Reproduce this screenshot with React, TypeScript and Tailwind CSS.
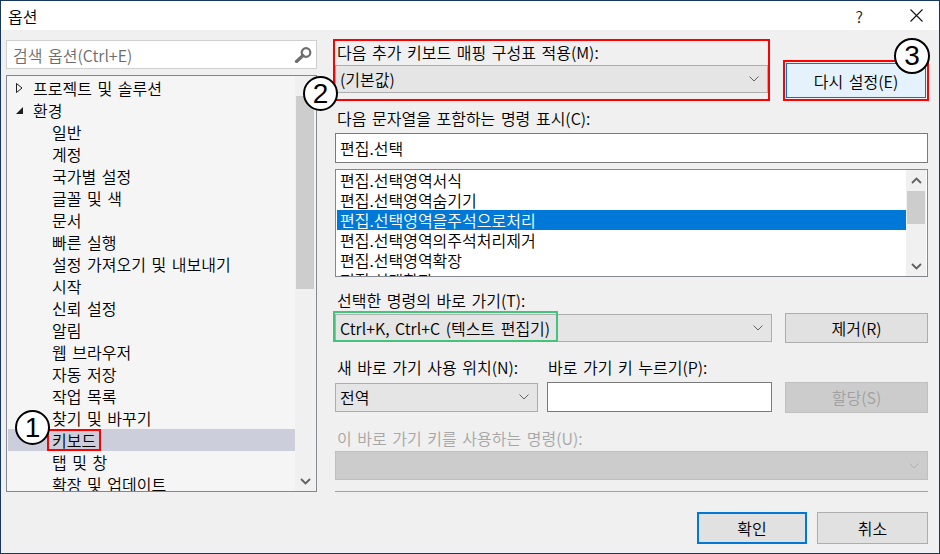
import React from "react";

function Chevron({ className = "" }: { className?: string }) {
  return (
    <svg width="10" height="6" viewBox="0 0 10 6" className={className}>
      <path d="M0.5 0.5 L5 5 L9.5 0.5" fill="none" stroke="currentColor" strokeWidth="1" />
    </svg>
  );
}

function ScrollChevron({ up = false }: { up?: boolean }) {
  return (
    <svg width="11" height="7" viewBox="0 0 11 7" className="text-[#606060]">
      <path
        d={up ? "M1 6 L5.5 1.5 L10 6" : "M1 1 L5.5 5.5 L10 1"}
        fill="none"
        stroke="currentColor"
        strokeWidth="1.8"
      />
    </svg>
  );
}

function Combo({
  text,
  className = "",
  disabled = false,
}: {
  text?: string;
  className?: string;
  disabled?: boolean;
}) {
  return (
    <div
      className={
        "flex items-center border " +
        (disabled ? "border-[#bfbfbf] bg-[#cccccc]" : "border-[#adadad] bg-[#e5e5e5]") +
        " " +
        className
      }
    >
      <span className="pl-[4px] flex-1 leading-[20px] whitespace-nowrap">{text}</span>
      <Chevron className={disabled ? "mr-[8px] text-[#b0b0b0]" : "mr-[8px] text-[#606060]"} />
    </div>
  );
}

function Circle({ n, className }: { n: string; className: string }) {
  return (
    <div
      className={
        "absolute rounded-full border-2 border-black bg-white flex items-center justify-center text-[28px] leading-none font-normal font-['Liberation_Sans',sans-serif] " +
        className
      }
    >
      {n}
    </div>
  );
}

const treeItems: { label: string; level: number; kind?: "collapsed" | "expanded"; selected?: boolean }[] = [
  { label: "프로젝트 및 솔루션", level: 0, kind: "collapsed" },
  { label: "환경", level: 0, kind: "expanded" },
  { label: "일반", level: 1 },
  { label: "계정", level: 1 },
  { label: "국가별 설정", level: 1 },
  { label: "글꼴 및 색", level: 1 },
  { label: "문서", level: 1 },
  { label: "빠른 실행", level: 1 },
  { label: "설정 가져오기 및 내보내기", level: 1 },
  { label: "시작", level: 1 },
  { label: "신뢰 설정", level: 1 },
  { label: "알림", level: 1 },
  { label: "웹 브라우저", level: 1 },
  { label: "자동 저장", level: 1 },
  { label: "작업 목록", level: 1 },
  { label: "찾기 및 바꾸기", level: 1 },
  { label: "키보드", level: 1, selected: true },
  { label: "탭 및 창", level: 1 },
  { label: "확장 및 업데이트", level: 1 },
];

const commands = [
  "편집.선택영역서식",
  "편집.선택영역숨기기",
  "편집.선택영역을주석으로처리",
  "편집.선택영역의주석처리제거",
  "편집.선택영역확장",
  "편집.선택확장",
];

export default function App() {
  return (
    <div className="w-[940px] h-[554px] border border-[#17375e] bg-[#f0f0f0] flex flex-col relative overflow-hidden font-['Noto_Sans_CJK_KR','Noto_Sans',sans-serif] font-[350] text-[16px] [word-spacing:2px] text-black">
      {/* Title bar */}
      <div className="h-[29px] bg-white flex items-center shrink-0">
        <span className="ml-[7px] leading-[20px]">옵션</span>
        <span className="ml-auto leading-[20px] text-[16px] text-[#222]">?</span>
        <svg width="13" height="13" viewBox="0 0 13 13" className="ml-[47px] mr-[16px]">
          <path d="M0.5 0.5 L12.5 12.5 M12.5 0.5 L0.5 12.5" stroke="#111" strokeWidth="1.1" />
        </svg>
      </div>

      <div className="flex flex-1">
        {/* Left column */}
        <div className="ml-[5px] mt-[10px] w-[311px] flex flex-col shrink-0">
          <div className="h-[29px] border border-[#cfcfcf] bg-white flex items-center">
            <span className="pl-[6px] text-[#6d6d6d] leading-[20px]">검색 옵션(Ctrl+E)</span>
            <svg width="18" height="16" viewBox="0 0 18 16" className="ml-auto mr-[4px]">
              <circle cx="12" cy="5.5" r="4.3" fill="none" stroke="#6d6d6d" strokeWidth="2.2" />
              <path d="M9 8.5 L2.5 14.5" stroke="#6d6d6d" strokeWidth="3.2" strokeLinecap="round" />
            </svg>
          </div>
          <div className="mt-[6px] h-[417px] border border-[#828790] bg-[#f5f5f5] flex overflow-hidden">
            <div className="flex-1 pl-[1px] pt-[1px] flex flex-col overflow-hidden">
              {treeItems.map((it) => (
                <div
                  key={it.label}
                  className={
                    "relative h-[22px] shrink-0 flex items-center leading-[22px] whitespace-nowrap " +
                    (it.selected ? "bg-[#cccedb]" : "")
                  }
                >
                  {it.level === 0 ? (
                    <>
                      <span className="w-[25px] flex justify-start pl-[8px] shrink-0">
                        {it.kind === "collapsed" ? (
                          <svg width="7" height="10" viewBox="0 0 7 10">
                            <path d="M0.5 0.5 L6 5 L0.5 9.5 Z" fill="none" stroke="#1e1e1e" strokeWidth="1" />
                          </svg>
                        ) : (
                          <svg width="7" height="7" viewBox="0 0 7 7">
                            <path d="M7 0 L7 7 L0 7 Z" fill="#1e1e1e" />
                          </svg>
                        )}
                      </span>
                      <span>{it.label}</span>
                    </>
                  ) : (
                    <span className="pl-[44px]">{it.label}</span>
                  )}
                  {it.selected && (
                    <div className="absolute left-[39px] top-0 w-[54px] h-[22px] border-2 border-[#ff0000]" />
                  )}
                </div>
              ))}
            </div>
            <div className="w-[20px] mr-[1px] bg-[#f0f0f0] flex flex-col shrink-0">
              <div className="h-[20px] shrink-0" />
              <div className="mx-[1px] h-[193px] bg-[#cdcdcd]" />
              <div className="flex-1" />
              <div className="h-[20px] flex items-center justify-center shrink-0">
                <ScrollChevron />
              </div>
            </div>
          </div>
        </div>

        {/* Right column */}
        <div className="ml-[18px] w-[593px] flex flex-col shrink-0">
          <div className="mt-[9px] flex items-end">
            <div className="-ml-[2px] w-[437px] h-[62px] border-2 border-[#ff0000] flex flex-col">
              <div className="h-[22px] leading-[22px] pl-[2px]">다음 추가 키보드 매핑 구성표 적용(M):</div>
              <Combo text="(기본값)" className="mt-[2px] h-[28px]" />
            </div>
            <div className="ml-[13px] -mr-[1px] w-[146px] h-[41px] border-2 border-[#ff0000] p-[1px] flex">
              <div className="flex-1 border border-[#0078d7] bg-[#e5f1fb] flex items-center justify-center leading-[20px]">
                다시 설정(E)
              </div>
            </div>
          </div>

          <div className="mt-[6px] h-[22px] leading-[22px] pl-[2px]">다음 문자열을 포함하는 명령 표시(C):</div>
          <div className="mt-[4px] h-[30px] border border-[#7a7a7a] bg-white flex items-center pl-[4px] leading-[20px]">
            편집.선택
          </div>

          <div className="mt-[6px] h-[108px] border border-[#828790] bg-white flex overflow-hidden">
            <div className="flex-1 pl-[1px] flex flex-col overflow-hidden">
              {commands.map((c, i) => (
                <div
                  key={c}
                  className={
                    "h-[20px] shrink-0 leading-[20px] pl-[3px] whitespace-nowrap " +
                    (i === 2 ? "bg-[#0078d7] text-white" : "")
                  }
                >
                  {c}
                </div>
              ))}
            </div>
            <div className="w-[20px] mr-[1px] bg-[#f0f0f0] flex flex-col shrink-0">
              <div className="h-[21px] flex items-center justify-center shrink-0">
                <ScrollChevron up />
              </div>
              <div className="mx-[1px] h-[33px] bg-[#cdcdcd]" />
              <div className="flex-1" />
              <div className="h-[20px] flex items-center justify-center shrink-0">
                <ScrollChevron />
              </div>
            </div>
          </div>

          <div className="mt-[12px] h-[22px] leading-[22px] pl-[2px]">선택한 명령의 바로 가기(T):</div>
          <div className="mt-[2px] h-[30px] flex items-center">
            <div className="relative w-[437px] h-[28px] flex">
              <Combo text="Ctrl+K, Ctrl+C (텍스트 편집기)" className="flex-1" />
              <div className="absolute -left-[2px] -top-[3px] w-[225px] h-[31px] border-2 border-[#43c47a]" />
            </div>
            <div className="ml-[13px] w-[143px] h-[30px] border border-[#adadad] bg-[#e1e1e1] flex items-center justify-center leading-[20px]">
              제거(R)
            </div>
          </div>

          <div className="mt-[13px] h-[22px] leading-[22px] flex">
            <span className="pl-[2px] w-[212px]">새 바로 가기 사용 위치(N):</span>
            <span className="pl-[1px]">바로 가기 키 누르기(P):</span>
          </div>
          <div className="mt-[4px] h-[30px] flex items-center">
            <Combo text="전역" className="w-[203px] h-[29px]" />
            <div className="ml-[9px] w-[225px] h-[30px] border border-[#7a7a7a] bg-white" />
            <div className="ml-[13px] w-[143px] h-[31px] border border-[#bfbfbf] bg-[#cccccc] text-[#a0a0a0] flex items-center justify-center leading-[20px]">
              할당(S)
            </div>
          </div>

          <div className="mt-[15px] h-[22px] leading-[22px] pl-[2px] text-[#a6a6a6]">이 바로 가기 키를 사용하는 명령(U):</div>
          <Combo disabled className="mt-[2px] h-[29px]" />

          <div className="mt-[11px] h-[1px] bg-[#a0a0a0]" />

          <div className="mt-[20px] flex justify-end">
            <div className="w-[110px] h-[32px] border-2 border-[#0078d7] bg-[#e1e1e1] flex items-center justify-center leading-[20px]">
              확인
            </div>
            <div className="ml-[10px] w-[111px] h-[32px] border border-[#adadad] bg-[#e1e1e1] flex items-center justify-center leading-[20px]">
              취소
            </div>
          </div>
        </div>
      </div>

      <Circle n="1" className="left-[14px] top-[409px] w-[35px] h-[35px]" />
      <Circle n="2" className="left-[302px] top-[75px] w-[35px] h-[35px]" />
      <Circle n="3" className="left-[893px] top-[37px] w-[36px] h-[36px]" />
    </div>
  );
}
